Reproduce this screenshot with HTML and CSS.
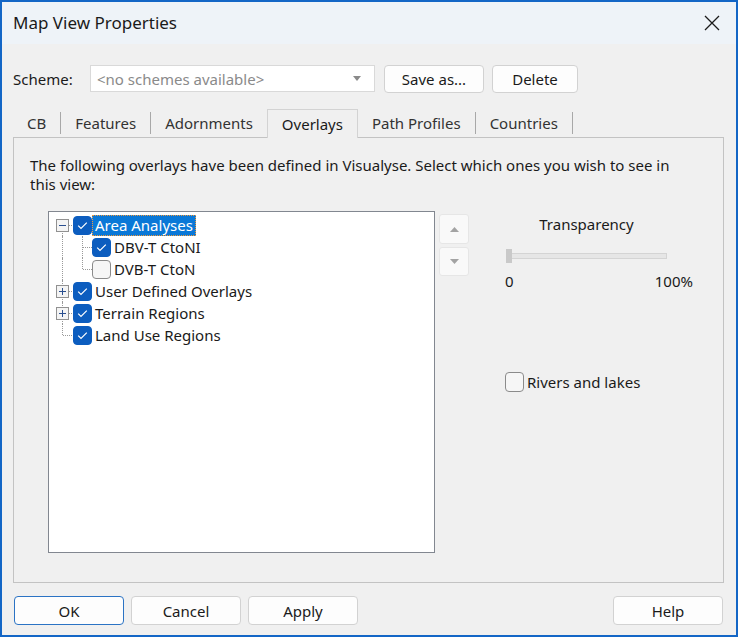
FILE: index.html
```html
<!DOCTYPE html>
<html lang="en">

<head>
    <meta charset="UTF-8">
    <title>Map View Properties</title>
    <link rel="stylesheet" href="styles.css">
</head>

<body>
    <div class="window">
        <div class="titlebar">
            <span class="title">Map View Properties</span>
            <span class="close">
                <svg width="16" height="16" viewBox="0 0 16 16"><path d="M1 1L15 15M15 1L1 15" stroke="#1b1b1b" stroke-width="1.3" fill="none"/></svg>
            </span>
        </div>

        <div class="scheme-row">
            <label class="scheme-label">Scheme:</label>
            <div class="combo">
                <span class="combo-text">&lt;no schemes available&gt;</span>
                <svg class="combo-arrow" width="8" height="5" viewBox="0 0 8 5"><path d="M0 0H8L4 5Z" fill="#8a8a8a"/></svg>
            </div>
            <button class="btn btn-save">Save as...</button>
            <button class="btn btn-delete">Delete</button>
        </div>

        <div class="tabs">
            <div class="tab">CB</div>
            <span class="sep"></span>
            <div class="tab">Features</div>
            <span class="sep"></span>
            <div class="tab">Adornments</div>
            <div class="tab active">Overlays</div>
            <div class="tab">Path Profiles</div>
            <span class="sep"></span>
            <div class="tab">Countries</div>
            <span class="sep"></span>
        </div>

        <div class="panel">
            <p class="intro">The following overlays have been defined in Visualyse. Select which ones you wish to see in this view:</p>

            <div class="panel-main">
                <div class="tree">
                    <div class="row">
                        <span class="cell line-bottom elbow"><span class="expander"><svg width="11" height="11" viewBox="0 0 11 11"><path d="M2 5.5H9" stroke="#2a4f8f" stroke-width="1"/></svg></span></span>
                        <span class="check on lvl0"><svg width="19" height="19" viewBox="0 0 19 19"><path d="M5.2 9.6L8 12.4L13.8 6.6" stroke="#fff" stroke-width="1.2" fill="none"/></svg></span>
                        <span class="label selected">Area Analyses</span>
                    </div>
                    <div class="row">
                        <span class="cell line-full"></span>
                        <span class="cell line-full elbow"></span>
                        <span class="check on"><svg width="19" height="19" viewBox="0 0 19 19"><path d="M5.2 9.6L8 12.4L13.8 6.6" stroke="#fff" stroke-width="1.2" fill="none"/></svg></span>
                        <span class="label">DBV-T CtoNI</span>
                    </div>
                    <div class="row">
                        <span class="cell line-full"></span>
                        <span class="cell line-top elbow"></span>
                        <span class="check"></span>
                        <span class="label">DVB-T CtoN</span>
                    </div>
                    <div class="row">
                        <span class="cell line-full elbow"><span class="expander"><svg width="11" height="11" viewBox="0 0 11 11"><path d="M2 5.5H9M5.5 2V9" stroke="#2a4f8f" stroke-width="1"/></svg></span></span>
                        <span class="check on lvl0"><svg width="19" height="19" viewBox="0 0 19 19"><path d="M5.2 9.6L8 12.4L13.8 6.6" stroke="#fff" stroke-width="1.2" fill="none"/></svg></span>
                        <span class="label">User Defined Overlays</span>
                    </div>
                    <div class="row">
                        <span class="cell line-full elbow"><span class="expander"><svg width="11" height="11" viewBox="0 0 11 11"><path d="M2 5.5H9M5.5 2V9" stroke="#2a4f8f" stroke-width="1"/></svg></span></span>
                        <span class="check on lvl0"><svg width="19" height="19" viewBox="0 0 19 19"><path d="M5.2 9.6L8 12.4L13.8 6.6" stroke="#fff" stroke-width="1.2" fill="none"/></svg></span>
                        <span class="label">Terrain Regions</span>
                    </div>
                    <div class="row">
                        <span class="cell line-top elbow"></span>
                        <span class="check on lvl0"><svg width="19" height="19" viewBox="0 0 19 19"><path d="M5.2 9.6L8 12.4L13.8 6.6" stroke="#fff" stroke-width="1.2" fill="none"/></svg></span>
                        <span class="label">Land Use Regions</span>
                    </div>
                </div>

                <div class="movers">
                    <span class="mover up"><svg width="9" height="5" viewBox="0 0 9 5"><path d="M0 5H9L4.5 0Z" fill="#a3a3a3"/></svg></span>
                    <span class="mover down"><svg width="9" height="5" viewBox="0 0 9 5"><path d="M0 0H9L4.5 5Z" fill="#a3a3a3"/></svg></span>
                </div>

                <div class="side">
                    <div class="slider-title">Transparency</div>
                    <div class="slider">
                        <span class="track"></span>
                        <span class="thumb"></span>
                    </div>
                    <div class="slider-labels">
                        <span>0</span>
                        <span>100%</span>
                    </div>
                    <label class="rivers">
                        <span class="check"></span>
                        <span>Rivers and lakes</span>
                    </label>
                </div>
            </div>
        </div>

        <div class="footer">
            <button class="btn btn-wide default">OK</button>
            <button class="btn btn-wide">Cancel</button>
            <button class="btn btn-wide">Apply</button>
            <button class="btn btn-wide btn-help">Help</button>
        </div>
    </div>
</body>

</html>
```

FILE: styles.css
```css
* {
  box-sizing: border-box;
}

body {
  margin: 0;
  background: #f0f0f0;
  font: normal 15px/20px "Noto Sans", sans-serif;
  color: #1a1a1a;
}

.window {
  width: 738px;
  height: 637px;
  border: 2px solid #1366c6;
  background: #f0f0f0;
  display: flex;
  flex-direction: column;
}

/* title bar */
.titlebar {
  height: 42px;
  background: #eef3f8;
  display: flex;
  align-items: center;
  padding: 0 16px 0 11px;
}
.title {
  font-size: 17px;
  flex: 1;
  padding-bottom: 1px;
}
.close {
  display: flex;
  margin-top: -1px;
}

/* scheme */
.scheme-row {
  display: flex;
  align-items: center;
  margin-top: 20px;
  padding-left: 11px;
  height: 29px;
}
.scheme-label {
  width: 77px;
}
.combo {
  width: 285px;
  height: 27px;
  background: #fff;
  border: 1px solid #d9d9d9;
  display: flex;
  align-items: center;
  padding: 0 13px 0 6px;
  margin-right: 9px;
}
.combo-text {
  flex: 1;
  color: #8a8a8a;
}

.btn {
  font: inherit;
  color: #1a1a1a;
  height: 28px;
  background: #fdfdfd;
  border: 1px solid #d2d2d2;
  border-radius: 4px;
  padding: 0;
}
.btn-save {
  width: 100px;
  margin-right: 8px;
}
.btn-delete {
  width: 86px;
}

/* tabs */
.tabs {
  display: flex;
  align-items: center;
  margin: 16px 0 0 11px;
  height: 28px;
  position: relative;
  z-index: 1;
}
.tab {
  padding: 0 14px;
  line-height: 26px;
  color: #333;
}
.tab.active {
  color: #1a1a1a;
  background: #f0f0f0;
  border: 1px solid #d3d3d3;
  border-bottom: none;
  height: 29px;
  align-self: flex-start;
  line-height: 28px;
  padding: 0 14px;
}
.sep {
  width: 1px;
  height: 22px;
  background: #a8a8a8;
}

/* panel */
.panel {
  margin: 0 12px 0 11px;
  height: 446px;
  border: 1px solid #c3c3c3;
  padding: 18px 16px 0 16px;
}
.intro {
  margin: 0;
  line-height: 19px;
  width: 650px;
}

.panel-main {
  display: flex;
  margin: 17px 0 0 18px;
}

.tree {
  width: 387px;
  height: 342px;
  background: #fff;
  border: 1px solid #828790;
  padding: 2px 0 0 3px;
}
.row {
  display: flex;
  align-items: center;
  height: 22px;
}
.cell {
  position: relative;
  width: 20px;
  height: 22px;
  flex: none;
}
.line-full::before,
.line-top::before,
.line-bottom::before {
  content: "";
  position: absolute;
  left: 10px;
  border-left: 1px dotted #9a9a9a;
}
.line-full::before {
  top: 0;
  height: 22px;
}
.line-top::before {
  top: 0;
  height: 11px;
}
.line-bottom::before {
  top: 11px;
  height: 11px;
}
.elbow::after {
  content: "";
  position: absolute;
  left: 11px;
  top: 11px;
  width: 9px;
  border-top: 1px dotted #9a9a9a;
}
.expander {
  position: absolute;
  left: 4px;
  top: 5px;
  width: 13px;
  height: 13px;
  border: 1px solid #919191;
  background: #f4f4f4;
  z-index: 1;
  display: flex;
}

.check {
  width: 19px;
  height: 19px;
  border-radius: 4px;
  border: 1px solid #8b8b8b;
  background: #f6f6f6;
  flex: none;
  display: flex;
}
.check.on {
  background: #0c5dbf;
  border-color: #0c5dbf;
}
.check svg {
  margin: -1px;
}
.check.lvl0 {
  margin-left: 1px;
}
.label {
  padding: 0 2px;
  line-height: 19px;
  border: 1px dotted transparent;
  white-space: nowrap;
}
.label.selected {
  background: #0a78d7;
  color: #fff;
  border-color: #f39a3a;
}

.movers {
  display: flex;
  flex-direction: column;
  gap: 3px;
  margin: 3px 0 0 4px;
}
.mover {
  width: 30px;
  height: 30px;
  background: #f9f9f9;
  border: 1px solid #e6e6e6;
  border-radius: 3px;
  display: flex;
  align-items: center;
  justify-content: center;
}
.mover.down {
  height: 29px;
}

.side {
  margin-left: 36px;
  width: 188px;
}
.slider-title {
  width: 163px;
  text-align: center;
  margin-top: 3px;
}
.slider {
  position: relative;
  width: 163px;
  height: 14px;
  margin-top: 15px;
}
.track {
  position: absolute;
  left: 2px;
  top: 4px;
  width: 160px;
  height: 6px;
  background: #e6e6e6;
  border: 1px solid #d4d4d4;
}
.thumb {
  position: absolute;
  left: 1px;
  top: 0;
  width: 6px;
  height: 14px;
  background: #c9c9c9;
}
.slider-labels {
  display: flex;
  justify-content: space-between;
  margin-top: 8px;
}
.rivers {
  display: flex;
  align-items: center;
  gap: 3px;
  margin-top: 81px;
}
.rivers .check {
  height: 20px;
}

/* footer */
.footer {
  display: flex;
  gap: 7px;
  margin: 13px 13px 0 12px;
}
.btn-wide {
  width: 110px;
  height: 29px;
}
.btn.default {
  border-color: #2b73c4;
}
.btn-help {
  margin-left: auto;
}
```
